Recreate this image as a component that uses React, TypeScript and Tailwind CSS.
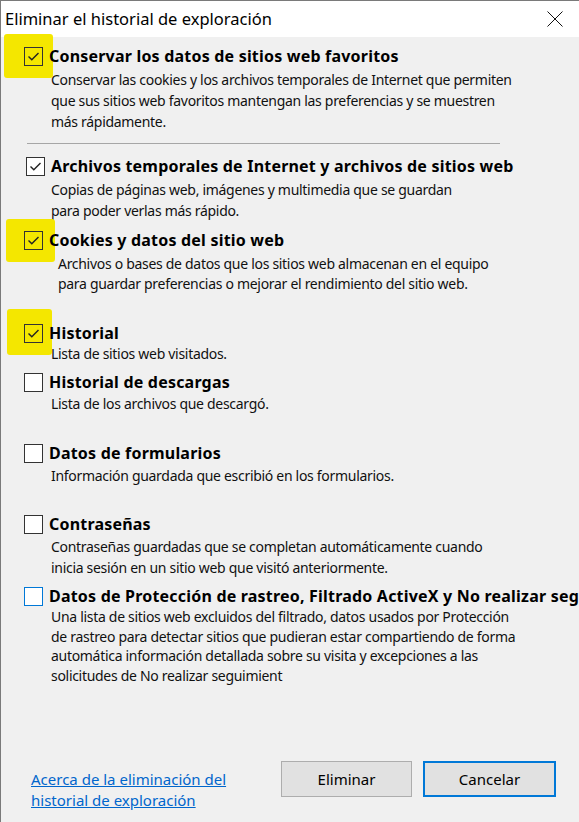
import React from "react";

type Entry = {
  label: string;
  lines: string[];
  checked: boolean;
  focus?: boolean;
  wrap: string;
  box: string;
  desc: string;
  mark?: string;
};

const entries: Entry[] = [
  {
    label: "Conservar los datos de sitios web favoritos",
    lines: [
      "Conservar las cookies y los archivos temporales de Internet que permiten",
      "que sus sitios web favoritos mantengan las preferencias y se muestren",
      "más rápidamente.",
    ],
    checked: true,
    wrap: "mt-[10px]",
    box: "ml-[23px]",
    desc: "mt-[3px] pl-[50px] leading-[21px]",
    mark: "left-[3px] top-[-13px] w-[49px] h-[44px]",
  },
];

const rest: Entry[] = [
  {
    label: "Archivos temporales de Internet y archivos de sitios web",
    lines: [
      "Copias de páginas web, imágenes y multimedia que se guardan",
      "para poder verlas más rápido.",
    ],
    checked: true,
    wrap: "mt-[13px]",
    box: "ml-[25px]",
    desc: "mt-[3px] pl-[50px] leading-[21px]",
  },
  {
    label: "Cookies y datos del sitio web",
    lines: [
      "Archivos o bases de datos que los sitios web almacenan en el equipo",
      "para guardar preferencias o mejorar el rendimiento del sitio web.",
    ],
    checked: true,
    wrap: "mt-[10px]",
    box: "ml-[23px]",
    desc: "mt-[4px] pl-[57px] leading-[20px]",
    mark: "left-[5px] top-[-12px] w-[49px] h-[43px]",
  },
  {
    label: "Historial",
    lines: ["Lista de sitios web visitados."],
    checked: true,
    wrap: "mt-[30px]",
    box: "ml-[23px]",
    desc: "mt-[1px] pl-[50px] leading-[20px]",
    mark: "left-[6px] top-[-15px] w-[45px] h-[46px]",
  },
  {
    label: "Historial de descargas",
    lines: ["Lista de los archivos que descargó."],
    checked: false,
    wrap: "mt-[9px]",
    box: "ml-[23px]",
    desc: "mt-[2px] pl-[50px] leading-[20px]",
  },
  {
    label: "Datos de formularios",
    lines: ["Información guardada que escribió en los formularios."],
    checked: false,
    wrap: "mt-[30px]",
    box: "ml-[23px]",
    desc: "mt-[3px] pl-[50px] leading-[20px]",
  },
  {
    label: "Contraseñas",
    lines: [
      "Contraseñas guardadas que se completan automáticamente cuando",
      "inicia sesión en un sitio web que visitó anteriormente.",
    ],
    checked: false,
    wrap: "mt-[29px]",
    box: "ml-[23px]",
    desc: "mt-[2px] pl-[50px] leading-[21px]",
  },
  {
    label: "Datos de Protección de rastreo, Filtrado ActiveX y No realizar seg",
    lines: [
      "Una lista de sitios web excluidos del filtrado, datos usados por Protección",
      "de rastreo para detectar sitios que pudieran estar compartiendo de forma",
      "automática información detallada sobre su visita y excepciones a las",
      "solicitudes de No realizar seguimient",
    ],
    checked: false,
    focus: true,
    wrap: "mt-[9px]",
    box: "ml-[23px]",
    desc: "mt-[1px] pl-[50px] leading-[19.5px]",
  },
];

function CheckBox({ checked, focus, marked }: { checked: boolean; focus?: boolean; marked?: boolean }) {
  const border = focus ? "border-[#0078d7]" : "border-[#333333]";
  const bg = marked ? "bg-transparent" : "bg-white";
  return (
    <div className={`relative w-[19px] h-[19px] shrink-0 border ${border} ${bg}`}>
      {checked && (
        <svg className="absolute left-0 top-0" width="17" height="17" viewBox="0 0 17 17">
          <polyline
            points="3.5,8.5 6.8,11.8 13.5,5"
            fill="none"
            stroke="#222"
            strokeWidth="1.4"
          />
        </svg>
      )}
    </div>
  );
}

function Option({ e }: { e: Entry }) {
  return (
    <div className={`relative ${e.wrap}`}>
      {e.mark && <div className={`absolute bg-[#f4e700] rounded-[3px] ${e.mark}`} />}
      <div className={`relative flex items-center h-[19px] gap-[6px] ${e.box}`}>
        <CheckBox checked={e.checked} focus={e.focus} marked={!!e.mark} />
        <span className="whitespace-nowrap font-bold text-[16px] tracking-[0.2px] text-black leading-[19px]">
          {e.label}
        </span>
      </div>
      <div className={`relative text-[14px] tracking-[-0.3px] text-[#111] ${e.desc}`}>
        {e.lines.map((l) => (
          <div key={l} className="whitespace-nowrap">
            {l}
          </div>
        ))}
      </div>
    </div>
  );
}

export default function App() {
  return (
    <div className="w-[579px] h-[822px] overflow-hidden bg-[#f0f0f0] border-l border-t border-[#7a7a7a] font-['Noto_Sans',sans-serif] flex flex-col">
      <div className="h-[36px] bg-white flex items-center justify-between pl-[4px] pr-[16px] shrink-0">
        <span className="text-[16.5px] text-black whitespace-nowrap">Eliminar el historial de exploración</span>
        <svg width="16" height="16" viewBox="0 0 16 16">
          <path d="M0.5 0.5 L15.5 15.5 M15.5 0.5 L0.5 15.5" stroke="#111" strokeWidth="1" fill="none" />
        </svg>
      </div>

      {entries.map((e) => (
        <Option key={e.label} e={e} />
      ))}

      <div className="mt-[11px] ml-[26px] w-[473px] h-px bg-[#a6a6a6] shrink-0" />

      {rest.map((e) => (
        <Option key={e.label} e={e} />
      ))}

      <div className="mt-[76px] flex items-start">
        <a
          href="#"
          className="mt-[8px] pl-[30px] text-[15px] leading-[21px] text-[#0066cc] underline"
        >
          Acerca de la eliminación del
          <br />
          historial de exploración
        </a>
        <div className="flex-1" />
        <div className="flex gap-[11px] pr-[23px]">
          <button className="w-[131px] h-[36px] bg-[#e1e1e1] border border-[#adadad] text-[15px] text-black">
            Eliminar
          </button>
          <button className="w-[133px] h-[36px] bg-[#e1e1e1] border-2 border-[#0078d7] text-[15px] text-black">
            Cancelar
          </button>
        </div>
      </div>
    </div>
  );
}
